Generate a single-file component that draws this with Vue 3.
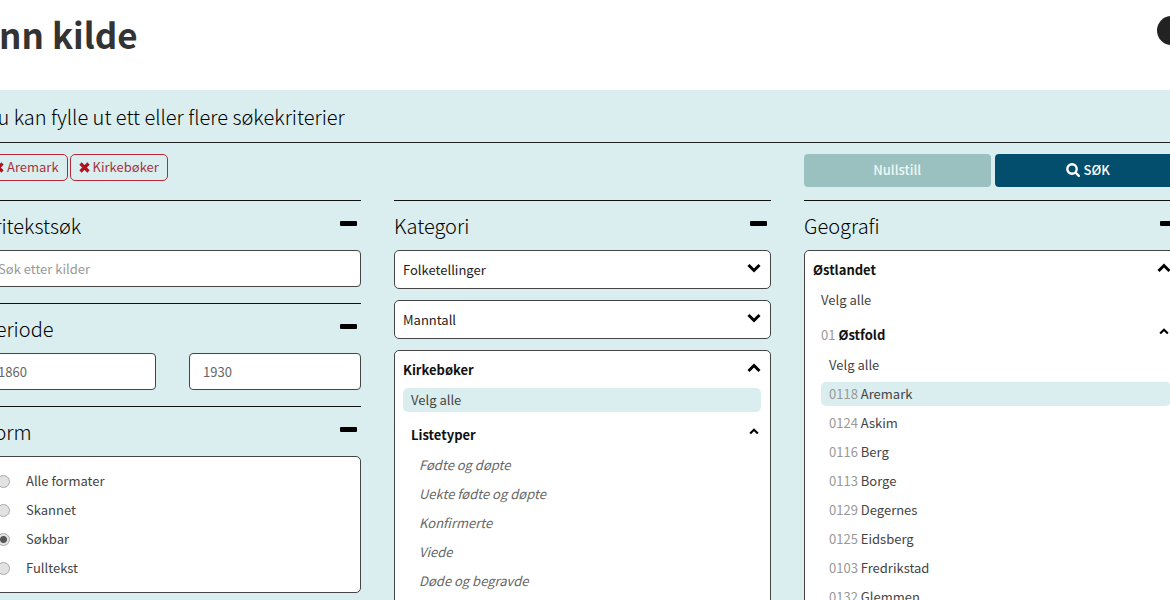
<script setup>
import { ref } from 'vue'

const tags = ref(['Aremark', 'Kirkebøker'])
const format = ref('Søkbar')
const formats = ['Alle formater', 'Skannet', 'Søkbar', 'Fulltekst']
const from = ref('1860')
const to = ref('1930')
const closed = ['Folketellinger', 'Manntall']
const listTypes = ['Fødte og døpte', 'Uekte fødte og døpte', 'Konfirmerte', 'Viede', 'Døde og begravde']
const places = [
  ['0118', 'Aremark'],
  ['0124', 'Askim'],
  ['0116', 'Berg'],
  ['0113', 'Borge'],
  ['0129', 'Degernes'],
  ['0125', 'Eidsberg'],
  ['0103', 'Fredrikstad'],
  ['0132', 'Glemmen'],
]
const removeTag = (tag) => {
  tags.value = tags.value.filter((t) => t !== tag)
}
</script>

<template>
  <div class="page">
    <header class="top">
      <h1>Finn kilde</h1>
      <button class="help" type="button" aria-label="Hjelp"></button>
    </header>

    <main class="panel">
      <p class="intro">Du kan fylle ut ett eller flere søkekriterier</p>

      <form class="grid" @submit.prevent>
        <div class="tags">
          <button v-for="tag in tags" :key="tag" class="tag" type="button" @click="removeTag(tag)">
            <svg class="cross" viewBox="0 0 11 11" aria-hidden="true"><path d="M1.500 1.500l8 8M9.500 1.500l-8 8" /></svg>
            <span>{{ tag }}</span>
          </button>
        </div>
        <div class="actions">
          <button class="btn reset" type="button">Nullstill</button>
          <button class="btn search" type="submit">
            <svg class="lens" viewBox="0 0 14 14" aria-hidden="true">
              <circle cx="6" cy="6" r="4.7" /><path d="M9.500 9.500l3.300 3.300" />
            </svg>
            <span>SØK</span>
          </button>
        </div>

        <div class="col">
          <section class="group">
            <div class="head">
              <h2><label for="free">Fritekstsøk</label></h2>
              <button class="minus" type="button" aria-label="Skjul fritekstsøk"></button>
            </div>
            <input id="free" class="field" type="text" placeholder="Søk etter kilder" />
          </section>
          <section class="group">
            <div class="head">
              <h2>Periode</h2>
              <button class="minus" type="button" aria-label="Skjul periode"></button>
            </div>
            <div class="period">
              <input v-model="from" class="field" type="text" aria-label="Fra år" />
              <input v-model="to" class="field" type="text" aria-label="Til år" />
            </div>
          </section>
          <section class="group">
            <div class="head">
              <h2>Form</h2>
              <button class="minus" type="button" aria-label="Skjul form"></button>
            </div>
            <div class="box radios">
              <label v-for="f in formats" :key="f" class="radio">
                <input v-model="format" type="radio" name="format" :value="f" />
                <span>{{ f }}</span>
              </label>
            </div>
          </section>
        </div>

        <div class="col">
          <section class="group">
            <div class="head">
              <h2>Kategori</h2>
              <button class="minus" type="button" aria-label="Skjul kategori"></button>
            </div>
            <div v-for="c in closed" :key="c" class="box">
              <button class="row" type="button" aria-expanded="false">
                <span>{{ c }}</span>
                <svg class="chev" viewBox="0 0 14 10" aria-hidden="true"><path d="M1.500 2L7 7.500L12.500 2" /></svg>
              </button>
            </div>
            <div class="box tree">
              <button class="row open" type="button" aria-expanded="true">
                <span>Kirkebøker</span>
                <svg class="chev" viewBox="0 0 14 10" aria-hidden="true"><path d="M1.500 8L7 2.500L12.500 8" /></svg>
              </button>
              <ul>
                <li><button class="item picked" type="button">Velg alle</button></li>
                <li>
                  <button class="row sub open" type="button" aria-expanded="true">
                    <span>Listetyper</span>
                    <svg class="chev small" viewBox="0 0 14 10" aria-hidden="true"><path d="M1.500 8L7 2.500L12.500 8" /></svg>
                  </button>
                  <ul class="inner">
                    <li v-for="t in listTypes" :key="t"><button class="item type" type="button">{{ t }}</button></li>
                  </ul>
                </li>
              </ul>
            </div>
          </section>
        </div>

        <div class="col">
          <section class="group">
            <div class="head">
              <h2>Geografi</h2>
              <button class="minus" type="button" aria-label="Skjul geografi"></button>
            </div>
            <div class="box tree">
              <button class="row open" type="button" aria-expanded="true">
                <span>Østlandet</span>
                <svg class="chev" viewBox="0 0 14 10" aria-hidden="true"><path d="M1.500 8L7 2.500L12.500 8" /></svg>
              </button>
              <ul>
                <li><button class="item" type="button">Velg alle</button></li>
                <li>
                  <button class="row sub open" type="button" aria-expanded="true">
                    <span><span class="code">01</span> Østfold</span>
                    <svg class="chev small" viewBox="0 0 14 10" aria-hidden="true"><path d="M1.500 8L7 2.500L12.500 8" /></svg>
                  </button>
                  <ul class="inner">
                    <li><button class="item" type="button">Velg alle</button></li>
                    <li v-for="[code, name] in places" :key="code">
                      <button class="item" :class="{ picked: tags.includes(name) }" type="button">
                        <span class="code">{{ code }}</span> {{ name }}
                      </button>
                    </li>
                  </ul>
                </li>
              </ul>
            </div>
          </section>
        </div>
      </form>
    </main>
  </div>
</template>

<style>
html {
  overflow: hidden;
}
body {
  margin: 0;
  background: #fff;
}
</style>

<style scoped>
.page {
  height: 100vh;
  overflow: hidden;
  display: flex;
  flex-direction: column;
  font-family: "Noto Sans CJK JP", "Open Sans", sans-serif;
  font-size: 13px;
  line-height: 20px;
  color: #444;
}
.page *,
.page *::before {
  box-sizing: border-box;
}
button,
input {
  margin: 0;
  padding: 0;
  border: 0;
  background: none;
  font: inherit;
  color: inherit;
}
button {
  cursor: pointer;
}
h1,
h2,
p,
ul {
  margin: 0;
  padding: 0;
}
ul {
  list-style: none;
}
.top {
  flex: none;
  display: flex;
  align-items: flex-start;
  justify-content: space-between;
  margin: 0 -16px;
  padding: 12px 0 34px;
}
h1 {
  margin-left: -16px;
  font-size: 35px;
  line-height: 44px;
  font-weight: 700;
  color: #333;
}
.help {
  width: 29px;
  height: 29px;
  margin-top: 4px;
  border-radius: 50%;
  background: #222;
}
.panel {
  flex: 1 0 auto;
  background: #daeeef;
}
.intro {
  margin: 0 -11px 11px -16px;
  padding: 13px 0 11px;
  border-bottom: 1px solid #222;
  font-size: 20px;
  line-height: 28px;
  font-weight: 300;
  color: #000;
}
.grid {
  display: grid;
  grid-template-columns: repeat(3, minmax(0, 1fr));
  column-gap: 33px;
  row-gap: 13px;
  margin: 0 -11px 0 -16px;
}
.tags {
  grid-column: span 2;
  display: flex;
  align-items: flex-start;
  gap: 2px;
}
.tag {
  display: flex;
  align-items: center;
  gap: 3px;
  height: 27px;
  padding: 0 8px 1px;
  border: 1px solid #b02a3a;
  border-radius: 5px;
  color: #a8323e;
}
.cross {
  width: 11px;
  height: 11px;
  fill: none;
  stroke: #b01020;
  stroke-width: 3.2;
}
.actions {
  display: grid;
  grid-template-columns: 1fr 1fr;
  gap: 4px;
}
.btn {
  display: flex;
  align-items: center;
  justify-content: center;
  gap: 4px;
  height: 33px;
  padding-bottom: 1px;
  border-radius: 4px;
  color: #fff;
  font-weight: 500;
}
.reset {
  background: #9ac1bf;
  color: #eef8f7;
}
.search {
  background: #044e6d;
}
.lens {
  width: 14px;
  height: 14px;
  fill: none;
  stroke: #fff;
  stroke-width: 2.4;
  stroke-linecap: round;
}
.group {
  margin-bottom: 16px;
  border-top: 1px solid #111;
}
.head {
  display: flex;
  align-items: center;
  justify-content: space-between;
  height: 49px;
  padding-right: 4px;
}
h2 {
  font-size: 20px;
  line-height: 28px;
  font-weight: 300;
  color: #000;
}
.minus {
  width: 17px;
  height: 20px;
  margin-bottom: 4px;
}
.minus::before {
  content: "";
  display: block;
  height: 5px;
  border-radius: 1px;
  background: #000;
}
.field {
  display: block;
  width: 100%;
  min-width: 0;
  height: 37px;
  padding: 0 13px;
  border: 1px solid #444;
  border-radius: 4px;
  background: #fff;
  color: #666;
}
.field::placeholder {
  color: #999;
  opacity: 1;
}
.period {
  display: flex;
  gap: 33px;
}
.box {
  margin-bottom: 11px;
  padding: 0 9px 0 8px;
  border: 1px solid #444;
  border-radius: 5px;
  background: #fff;
}
.tree {
  padding-bottom: 12px;
}
.radios {
  display: flex;
  flex-direction: column;
  gap: 5px;
  padding: 12px;
}
.radio {
  display: flex;
  align-items: center;
  gap: 16px;
  height: 24px;
}
.radio input {
  appearance: none;
  width: 13px;
  height: 13px;
  border: 1px solid #aaa;
  border-radius: 50%;
  background: #e2e2e2;
}
.radio input:checked {
  background: radial-gradient(circle, #555 0 3px, #e2e2e2 4px);
}
.row {
  display: flex;
  align-items: center;
  justify-content: space-between;
  width: 100%;
  height: 37px;
  text-align: left;
  color: #222;
}
.open {
  font-weight: 700;
  color: #111;
}
.sub {
  height: 36px;
  padding: 0 2px 0 8px;
}
.chev {
  width: 14px;
  height: 10px;
  margin-bottom: 4px;
  fill: none;
  stroke: #000;
  stroke-width: 3;
}
.small {
  width: 10px;
  height: 7px;
  margin-bottom: 7px;
}
.item {
  display: block;
  width: 100%;
  height: 24px;
  margin-bottom: 5px;
  padding: 0 8px;
  border-radius: 5px;
  text-align: left;
}
.inner {
  padding-left: 8px;
}
.picked {
  background: #daeeef;
}
.type {
  font-style: italic;
  color: #666;
}
.code {
  font-weight: 400;
  color: #999;
}
</style>
